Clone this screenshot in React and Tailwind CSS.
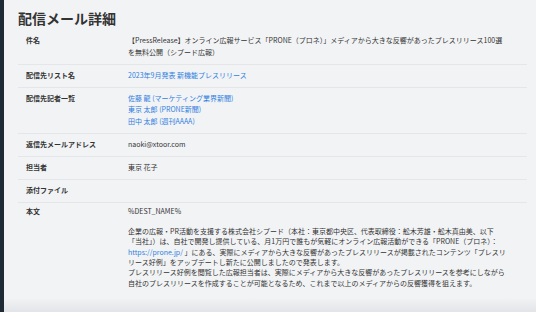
import React from 'react';

const font = { fontFamily: '"Noto Sans CJK JP", "Noto Sans", sans-serif' };

const rows = [
  {
    label: '件名',
    value: (
      <>
        <div>【PressRelease】オンライン広報サービス「PRONE（プロネ）」メディアから大きな反響があったプレスリリース100選</div>
        <div>を無料公開（シプード広報）</div>
      </>
    ),
  },
  { label: '配信先リスト名', value: <span className="text-[#2f7fe0]">2023年9月発表 新機能プレスリリース</span> },
  {
    label: '配信先記者一覧',
    value: (
      <div className="flex flex-col text-[#2f7fe0]">
        <span>佐藤 龍 (マーケティング業界新聞)</span>
        <span>東京 太郎 (PRONE新聞)</span>
        <span>田中 太郎 (週刊AAAA)</span>
      </div>
    ),
  },
  { label: '返信先メールアドレス', value: 'naoki@xtoor.com' },
  { label: '担当者', value: '東京 花子' },
  { label: '添付ファイル', value: '' },
];

const body = [
  '企業の広報・PR活動を支援する株式会社シプード（本社：東京都中央区、代表取締役：舩木芳雄・舩木真由美、以下',
  '「当社」）は、自社で開発し提供している、月1万円で誰もが気軽にオンライン広報活動ができる「PRONE（プロネ）：',
  null,
  'リース好例」をアップデートし新たに公開しましたので発表します。',
  'プレスリリース好例を閲覧した広報担当者は、実際にメディアから大きな反響があったプレスリリースを参考にしながら',
  '自社のプレスリリースを作成することが可能となるため、これまで以上のメディアからの反響獲得を狙えます。',
];

export default function App() {
  return (
    <div className="flex h-[312px] w-[536px] overflow-hidden bg-[#f2f3f5] text-[#333]" style={font}>
      <div className="w-[4px] shrink-0 bg-[#1f2a37]" />
      <div className="flex flex-1 flex-col">
        <div className="flex-1 pl-[14px] pr-[9px] pt-[8px]">
          <h1 className="text-[14px] font-bold leading-[20px]">配信メール詳細</h1>
          <div className="mt-[2px] text-[7px] leading-[11.5px]">
            {rows.map(r => (
              <div key={r.label} className="flex border-b border-[#e4e6ea] py-[5.25px]">
                <div className="w-[110px] shrink-0 pl-[8px] font-bold">{r.label}</div>
                <div className="min-h-[11.5px] flex-1">{r.value}</div>
              </div>
            ))}
            <div className="flex pt-[3px] leading-[10.3px]">
              <div className="w-[110px] shrink-0 pl-[8px] font-bold">本文</div>
              <div className="flex-1 whitespace-nowrap">
                <div>%DEST_NAME%</div>
                <div className="h-[10.3px]" />
                {body.map((line, i) =>
                  line === null ? (
                    <div key={i}>
                      <span className="text-[#2f7fe0]">https://prone.jp/</span> 」にある、実際にメディアから大きな反響があったプレスリリースが掲載されたコンテンツ「プレスリ
                    </div>
                  ) : (
                    <div key={i}>{line}</div>
                  )
                )}
              </div>
            </div>
          </div>
        </div>
        <div className="h-[14px] shrink-0 bg-gradient-to-b from-[#f2f3f5] to-[#e3e4e7]" />
      </div>
    </div>
  );
}
